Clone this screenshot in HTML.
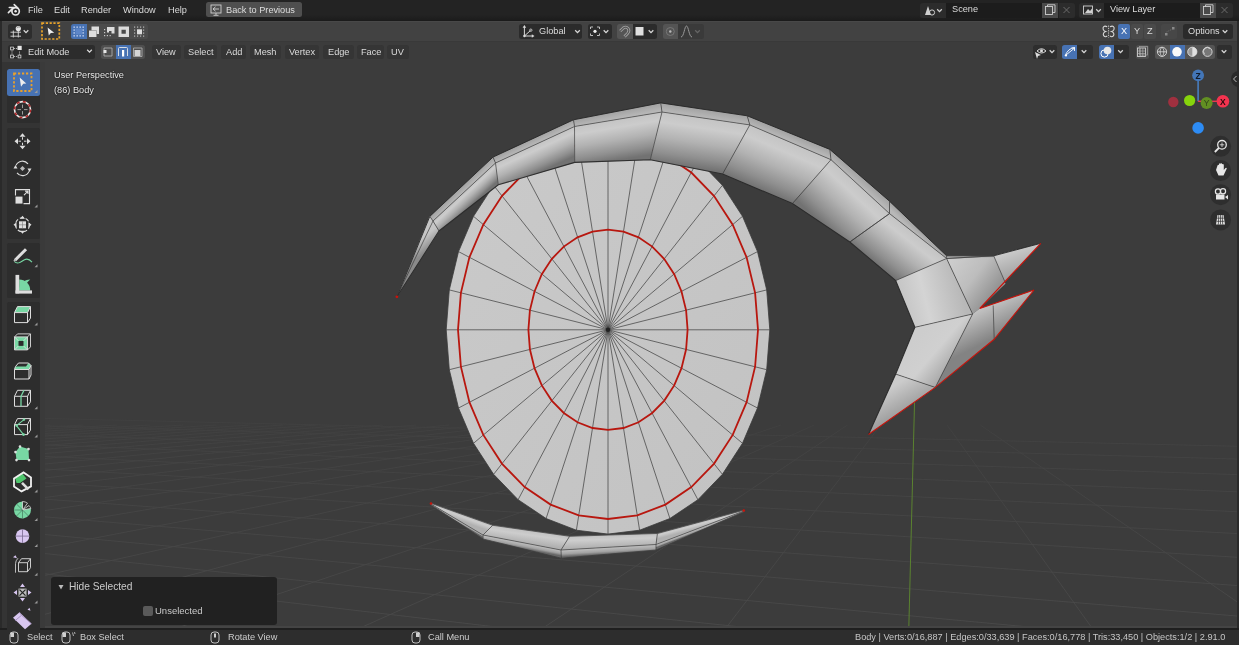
<!DOCTYPE html>
<html><head><meta charset="utf-8">
<style>
*{margin:0;padding:0;box-sizing:border-box}
html,body{width:1239px;height:645px;overflow:hidden;background:#3c3c3c;font-family:"Liberation Sans",sans-serif}
.a{position:absolute}
.t{position:absolute;font-size:9.2px;line-height:11px;white-space:nowrap;color:#dcdcdc;will-change:transform}
.sh{text-shadow:0 0 1.5px #111,0 0 1px #111}
.b{position:absolute;border-radius:2.5px}
svg{position:absolute;left:0;top:0;overflow:visible}
</style></head><body>
<svg width="1239" height="645" viewBox="0 0 1239 645">
<defs>
<linearGradient id="gdisc" x1="0" y1="0" x2="1" y2="1">
<stop offset="0" stop-color="#cacaca"/><stop offset="1" stop-color="#c2c2c2"/></linearGradient>
<linearGradient id="gbrow" x1="0" y1="0" x2="0" y2="1">
<stop offset="0" stop-color="#d4d4d4"/><stop offset="0.55" stop-color="#c4c4c4"/><stop offset="1" stop-color="#8c8c8c"/></linearGradient>
<linearGradient id="gclaw" x1="0" y1="0" x2="1" y2="1">
<stop offset="0" stop-color="#d0d0d0"/><stop offset="0.6" stop-color="#b8b8b8"/><stop offset="1" stop-color="#8a8a8a"/></linearGradient>
<linearGradient id="glid" x1="0" y1="0" x2="0" y2="1">
<stop offset="0" stop-color="#cfcfcf"/><stop offset="0.5" stop-color="#bdbdbd"/><stop offset="1" stop-color="#777"/></linearGradient>
</defs>
<linearGradient id="gfade" x1="0" y1="380" x2="0" y2="645" gradientUnits="userSpaceOnUse"><stop offset="0" stop-color="#fff" stop-opacity="0"/><stop offset="0.25" stop-color="#fff" stop-opacity="0.5"/><stop offset="1" stop-color="#fff" stop-opacity="1"/></linearGradient>
<mask id="mfade" maskUnits="userSpaceOnUse" x="0" y="0" width="1239" height="645"><rect x="0" y="380" width="1239" height="265" fill="url(#gfade)"/></mask>
<g stroke="#4b4b4b" stroke-width="0.9" mask="url(#mfade)"><line x1="-82.3" y1="425" x2="-4957.7" y2="645"/><line x1="-49.1" y1="425" x2="-4762.2" y2="645"/><line x1="-15.8" y1="425" x2="-4566.7" y2="645"/><line x1="17.4" y1="425" x2="-4371.1" y2="645"/><line x1="50.6" y1="425" x2="-4175.6" y2="645"/><line x1="83.8" y1="425" x2="-3980" y2="645"/><line x1="117" y1="425" x2="-3784.5" y2="645"/><line x1="150.2" y1="425" x2="-3588.9" y2="645"/><line x1="183.4" y1="425" x2="-3393.4" y2="645"/><line x1="216.6" y1="425" x2="-3197.8" y2="645"/><line x1="249.8" y1="425" x2="-3002.3" y2="645"/><line x1="283" y1="425" x2="-2806.8" y2="645"/><line x1="316.2" y1="425" x2="-2611.2" y2="645"/><line x1="349.4" y1="425" x2="-2415.7" y2="645"/><line x1="382.6" y1="425" x2="-2220.1" y2="645"/><line x1="415.8" y1="425" x2="-2024.6" y2="645"/><line x1="449" y1="425" x2="-1829" y2="645"/><line x1="482.2" y1="425" x2="-1633.5" y2="645"/><line x1="515.4" y1="425" x2="-1437.9" y2="645"/><line x1="548.6" y1="425" x2="-1242.4" y2="645"/><line x1="581.9" y1="425" x2="-1046.9" y2="645"/><line x1="615.1" y1="425" x2="-851.3" y2="645"/><line x1="648.3" y1="425" x2="-655.8" y2="645"/><line x1="681.5" y1="425" x2="-460.2" y2="645"/><line x1="714.7" y1="425" x2="-264.7" y2="645"/><line x1="747.9" y1="425" x2="-69.1" y2="645"/><line x1="781.1" y1="425" x2="126.4" y2="645"/><line x1="814.3" y1="425" x2="322" y2="645"/><line x1="847.5" y1="425" x2="517.5" y2="645"/><line x1="880.7" y1="425" x2="713" y2="645"/><line x1="947.1" y1="425" x2="1104.1" y2="645"/><line x1="980.3" y1="425" x2="1299.7" y2="645"/><line x1="0" y1="417.4" x2="1239" y2="446.3"/><line x1="0" y1="424.6" x2="1239" y2="459.1"/><line x1="0" y1="433.4" x2="1239" y2="474.7"/><line x1="0" y1="443.1" x2="1239" y2="491.9"/><line x1="0" y1="454.3" x2="1239" y2="511.8"/><line x1="0" y1="466.6" x2="1239" y2="533.7"/><line x1="0" y1="480" x2="1239" y2="557.4"/><line x1="0" y1="495.9" x2="1239" y2="585.7"/><line x1="0" y1="513.1" x2="1239" y2="616.2"/><line x1="0" y1="530.3" x2="1239" y2="646.7"/><line x1="0" y1="548.8" x2="1239" y2="679.5"/><line x1="0" y1="568.5" x2="1239" y2="714.5"/></g>
<line x1="914.6" y1="400" x2="908.8" y2="628" stroke="#5b8330" stroke-width="1"/>
<polygon points="769.8,329.8 766.7,289.9 757.5,251.6 742.5,216.3 722.4,185.3 697.9,159.9 669.9,141.1 639.6,129.4 608,125.5 576.4,129.4 546.1,141.1 518.1,159.9 493.6,185.3 473.5,216.3 458.5,251.6 449.3,289.9 446.2,329.8 449.3,369.7 458.5,408 473.5,443.3 493.6,474.3 518.1,499.7 546.1,518.5 576.4,530.2 608,534.1 639.6,530.2 669.9,518.5 697.9,499.7 722.4,474.3 742.5,443.3 757.5,408 766.7,369.7" fill="url(#gdisc)" stroke="#3a3a3a" stroke-width="0.8"/>
<g stroke="#2e2e2e" stroke-width="0.75" opacity="0.85"><line x1="608.0" y1="329.8" x2="769.8" y2="329.8"/><line x1="608.0" y1="329.8" x2="766.7" y2="289.9"/><line x1="608.0" y1="329.8" x2="757.5" y2="251.6"/><line x1="608.0" y1="329.8" x2="742.5" y2="216.3"/><line x1="608.0" y1="329.8" x2="722.4" y2="185.3"/><line x1="608.0" y1="329.8" x2="697.9" y2="159.9"/><line x1="608.0" y1="329.8" x2="669.9" y2="141.1"/><line x1="608.0" y1="329.8" x2="639.6" y2="129.4"/><line x1="608.0" y1="329.8" x2="608" y2="125.5"/><line x1="608.0" y1="329.8" x2="576.4" y2="129.4"/><line x1="608.0" y1="329.8" x2="546.1" y2="141.1"/><line x1="608.0" y1="329.8" x2="518.1" y2="159.9"/><line x1="608.0" y1="329.8" x2="493.6" y2="185.3"/><line x1="608.0" y1="329.8" x2="473.5" y2="216.3"/><line x1="608.0" y1="329.8" x2="458.5" y2="251.6"/><line x1="608.0" y1="329.8" x2="449.3" y2="289.9"/><line x1="608.0" y1="329.8" x2="446.2" y2="329.8"/><line x1="608.0" y1="329.8" x2="449.3" y2="369.7"/><line x1="608.0" y1="329.8" x2="458.5" y2="408"/><line x1="608.0" y1="329.8" x2="473.5" y2="443.3"/><line x1="608.0" y1="329.8" x2="493.6" y2="474.3"/><line x1="608.0" y1="329.8" x2="518.1" y2="499.7"/><line x1="608.0" y1="329.8" x2="546.1" y2="518.5"/><line x1="608.0" y1="329.8" x2="576.4" y2="530.2"/><line x1="608.0" y1="329.8" x2="608" y2="534.1"/><line x1="608.0" y1="329.8" x2="639.6" y2="530.2"/><line x1="608.0" y1="329.8" x2="669.9" y2="518.5"/><line x1="608.0" y1="329.8" x2="697.9" y2="499.7"/><line x1="608.0" y1="329.8" x2="722.4" y2="474.3"/><line x1="608.0" y1="329.8" x2="742.5" y2="443.3"/><line x1="608.0" y1="329.8" x2="757.5" y2="408"/><line x1="608.0" y1="329.8" x2="766.7" y2="369.7"/></g>
<polygon points="687.6,329.8 686.1,310.3 681.5,291.5 674.2,274.2 664.3,259 652.2,246.6 638.5,237.3 623.5,231.6 608,229.7 592.5,231.6 577.5,237.3 563.8,246.6 551.7,259 541.8,274.2 534.5,291.5 529.9,310.3 528.4,329.8 529.9,349.3 534.5,368.1 541.8,385.4 551.7,400.6 563.8,413 577.5,422.3 592.5,428 608,429.9 623.5,428 638.5,422.3 652.2,413 664.3,400.6 674.2,385.4 681.5,368.1 686.1,349.3" fill="none" stroke="#b8170f" stroke-width="1.8"/>
<polygon points="758,329.8 755.1,292.9 746.6,257.4 732.7,224.7 714.1,196 691.3,172.5 665.4,155 637.3,144.2 608,140.6 578.7,144.2 550.6,155 524.7,172.5 501.9,196 483.3,224.7 469.4,257.4 460.9,292.9 458,329.8 460.9,366.7 469.4,402.2 483.3,434.9 501.9,463.6 524.7,487.1 550.6,504.6 578.7,515.4 608,519 637.3,515.4 665.4,504.6 691.3,487.1 714.1,463.6 732.7,434.9 746.6,402.2 755.1,366.7" fill="none" stroke="#b8170f" stroke-width="1.8"/>
<circle cx="608.0" cy="329.8" r="2.2" fill="#222"/>
<polygon points="396.9,296.8 429.8,216.4 433,221 396.9,296.8" fill="#b0b0b0"/>
<linearGradient id="lg1" gradientUnits="userSpaceOnUse" x1="420" y1="240" x2="428" y2="250"><stop offset="0" stop-color="#c6c6c6"/><stop offset="1" stop-color="#8a8a8a"/></linearGradient>
<polygon points="396.9,296.8 429.8,216.4 439,231" fill="url(#lg1)" stroke="url(#lg1)" stroke-width="0.4"/>
<linearGradient id="lg2" gradientUnits="userSpaceOnUse" x1="461.4" y1="186.8" x2="465.4" y2="191"><stop offset="0" stop-color="#a2a2a2"/><stop offset="0.7" stop-color="#b2b2b2"/><stop offset="1" stop-color="#b8b8b8"/></linearGradient>
<polygon points="429.8,216.4 493,157.1 495.5,163 433,221" fill="url(#lg2)"/>
<linearGradient id="lg3" gradientUnits="userSpaceOnUse" x1="464.2" y1="192" x2="474.2" y2="202.7"><stop offset="0" stop-color="#c4c4c4"/><stop offset="0.2" stop-color="#cccccc"/><stop offset="0.5" stop-color="#b2b2b2"/><stop offset="0.8" stop-color="#8f8f8f"/><stop offset="1" stop-color="#727272"/></linearGradient>
<linearGradient id="lg4" gradientUnits="userSpaceOnUse" x1="464.2" y1="192" x2="474.2" y2="202.7"><stop offset="0" stop-color="#c4c4c4"/><stop offset="0.2" stop-color="#cccccc"/><stop offset="0.5" stop-color="#b2b2b2"/><stop offset="0.8" stop-color="#8f8f8f"/><stop offset="1" stop-color="#727272"/></linearGradient>
<polygon points="433,221 495.5,163 498.3,184.8 439,231" fill="url(#lg3)" stroke="url(#lg4)" stroke-width="0.4"/>
<linearGradient id="lg5" gradientUnits="userSpaceOnUse" x1="533.2" y1="138.4" x2="536" y2="144.3"><stop offset="0" stop-color="#a2a2a2"/><stop offset="0.7" stop-color="#b2b2b2"/><stop offset="1" stop-color="#b8b8b8"/></linearGradient>
<polygon points="493,157.1 573.5,119.8 574.5,126.5 495.5,163" fill="url(#lg5)"/>
<linearGradient id="lg6" gradientUnits="userSpaceOnUse" x1="535" y1="144.8" x2="546.2" y2="169.1"><stop offset="0" stop-color="#c4c4c4"/><stop offset="0.2" stop-color="#cccccc"/><stop offset="0.5" stop-color="#b2b2b2"/><stop offset="0.8" stop-color="#8f8f8f"/><stop offset="1" stop-color="#727272"/></linearGradient>
<linearGradient id="lg7" gradientUnits="userSpaceOnUse" x1="535" y1="144.8" x2="546.2" y2="169.1"><stop offset="0" stop-color="#c4c4c4"/><stop offset="0.2" stop-color="#cccccc"/><stop offset="0.5" stop-color="#b2b2b2"/><stop offset="0.8" stop-color="#8f8f8f"/><stop offset="1" stop-color="#727272"/></linearGradient>
<polygon points="495.5,163 574.5,126.5 574.7,162.4 498.3,184.8" fill="url(#lg6)" stroke="url(#lg7)" stroke-width="0.4"/>
<linearGradient id="lg8" gradientUnits="userSpaceOnUse" x1="617.1" y1="111.3" x2="618.6" y2="119.2"><stop offset="0" stop-color="#a2a2a2"/><stop offset="0.7" stop-color="#b2b2b2"/><stop offset="1" stop-color="#b8b8b8"/></linearGradient>
<polygon points="573.5,119.8 660.7,102.9 662,112 574.5,126.5" fill="url(#lg8)"/>
<linearGradient id="lg9" gradientUnits="userSpaceOnUse" x1="618.2" y1="119.2" x2="624.8" y2="159"><stop offset="0" stop-color="#c4c4c4"/><stop offset="0.2" stop-color="#cccccc"/><stop offset="0.5" stop-color="#b2b2b2"/><stop offset="0.8" stop-color="#8f8f8f"/><stop offset="1" stop-color="#727272"/></linearGradient>
<linearGradient id="lg10" gradientUnits="userSpaceOnUse" x1="618.2" y1="119.2" x2="624.8" y2="159"><stop offset="0" stop-color="#c4c4c4"/><stop offset="0.2" stop-color="#cccccc"/><stop offset="0.5" stop-color="#b2b2b2"/><stop offset="0.8" stop-color="#8f8f8f"/><stop offset="1" stop-color="#727272"/></linearGradient>
<polygon points="574.5,126.5 662,112 650.3,159.7 574.7,162.4" fill="url(#lg9)" stroke="url(#lg10)" stroke-width="0.4"/>
<linearGradient id="lg11" gradientUnits="userSpaceOnUse" x1="704" y1="109.3" x2="702.7" y2="118"><stop offset="0" stop-color="#a2a2a2"/><stop offset="0.7" stop-color="#b2b2b2"/><stop offset="1" stop-color="#b8b8b8"/></linearGradient>
<polygon points="660.7,102.9 747.2,115.8 749.8,124.9 662,112" fill="url(#lg11)"/>
<linearGradient id="lg12" gradientUnits="userSpaceOnUse" x1="705.9" y1="118.5" x2="698.5" y2="168.6"><stop offset="0" stop-color="#c4c4c4"/><stop offset="0.2" stop-color="#cccccc"/><stop offset="0.5" stop-color="#b2b2b2"/><stop offset="0.8" stop-color="#8f8f8f"/><stop offset="1" stop-color="#727272"/></linearGradient>
<linearGradient id="lg13" gradientUnits="userSpaceOnUse" x1="705.9" y1="118.5" x2="698.5" y2="168.6"><stop offset="0" stop-color="#c4c4c4"/><stop offset="0.2" stop-color="#cccccc"/><stop offset="0.5" stop-color="#b2b2b2"/><stop offset="0.8" stop-color="#8f8f8f"/><stop offset="1" stop-color="#727272"/></linearGradient>
<polygon points="662,112 749.8,124.9 722.6,174 650.3,159.7" fill="url(#lg12)" stroke="url(#lg13)" stroke-width="0.4"/>
<linearGradient id="lg14" gradientUnits="userSpaceOnUse" x1="788.5" y1="132.6" x2="785.4" y2="140.3"><stop offset="0" stop-color="#a2a2a2"/><stop offset="0.7" stop-color="#b2b2b2"/><stop offset="1" stop-color="#b8b8b8"/></linearGradient>
<polygon points="747.2,115.8 829.8,149.4 831,159.7 749.8,124.9" fill="url(#lg14)"/>
<linearGradient id="lg15" gradientUnits="userSpaceOnUse" x1="790.4" y1="142.3" x2="768.5" y2="193.5"><stop offset="0" stop-color="#c4c4c4"/><stop offset="0.2" stop-color="#cccccc"/><stop offset="0.5" stop-color="#b2b2b2"/><stop offset="0.8" stop-color="#8f8f8f"/><stop offset="1" stop-color="#727272"/></linearGradient>
<linearGradient id="lg16" gradientUnits="userSpaceOnUse" x1="790.4" y1="142.3" x2="768.5" y2="193.5"><stop offset="0" stop-color="#c4c4c4"/><stop offset="0.2" stop-color="#cccccc"/><stop offset="0.5" stop-color="#b2b2b2"/><stop offset="0.8" stop-color="#8f8f8f"/><stop offset="1" stop-color="#727272"/></linearGradient>
<polygon points="749.8,124.9 831,159.7 792.4,203.6 722.6,174" fill="url(#lg15)" stroke="url(#lg16)" stroke-width="0.4"/>
<linearGradient id="lg17" gradientUnits="userSpaceOnUse" x1="859.6" y1="175.3" x2="854.3" y2="181.5"><stop offset="0" stop-color="#a2a2a2"/><stop offset="0.7" stop-color="#b2b2b2"/><stop offset="1" stop-color="#b8b8b8"/></linearGradient>
<polygon points="829.8,149.4 889.5,201.2 889.5,213.6 831,159.7" fill="url(#lg17)"/>
<linearGradient id="lg18" gradientUnits="userSpaceOnUse" x1="860.2" y1="186.6" x2="824.3" y2="225.7"><stop offset="0" stop-color="#c4c4c4"/><stop offset="0.2" stop-color="#cccccc"/><stop offset="0.5" stop-color="#b2b2b2"/><stop offset="0.8" stop-color="#8f8f8f"/><stop offset="1" stop-color="#727272"/></linearGradient>
<linearGradient id="lg19" gradientUnits="userSpaceOnUse" x1="860.2" y1="186.6" x2="824.3" y2="225.7"><stop offset="0" stop-color="#c4c4c4"/><stop offset="0.2" stop-color="#cccccc"/><stop offset="0.5" stop-color="#b2b2b2"/><stop offset="0.8" stop-color="#8f8f8f"/><stop offset="1" stop-color="#727272"/></linearGradient>
<polygon points="831,159.7 889.5,213.6 849.8,242 792.4,203.6" fill="url(#lg18)" stroke="url(#lg19)" stroke-width="0.4"/>
<linearGradient id="lg20" gradientUnits="userSpaceOnUse" x1="918" y1="228.5" x2="914.3" y2="232.4"><stop offset="0" stop-color="#a2a2a2"/><stop offset="0.7" stop-color="#b2b2b2"/><stop offset="1" stop-color="#b8b8b8"/></linearGradient>
<polygon points="889.5,201.2 946.6,255.8 946.6,258.5 889.5,213.6" fill="url(#lg20)"/>
<linearGradient id="lg21" gradientUnits="userSpaceOnUse" x1="918" y1="236.1" x2="888.5" y2="273.7"><stop offset="0" stop-color="#c4c4c4"/><stop offset="0.2" stop-color="#cccccc"/><stop offset="0.5" stop-color="#b2b2b2"/><stop offset="0.8" stop-color="#8f8f8f"/><stop offset="1" stop-color="#727272"/></linearGradient>
<linearGradient id="lg22" gradientUnits="userSpaceOnUse" x1="918" y1="236.1" x2="888.5" y2="273.7"><stop offset="0" stop-color="#c4c4c4"/><stop offset="0.2" stop-color="#cccccc"/><stop offset="0.5" stop-color="#b2b2b2"/><stop offset="0.8" stop-color="#8f8f8f"/><stop offset="1" stop-color="#727272"/></linearGradient>
<polygon points="889.5,213.6 946.6,258.5 895.7,280.6 849.8,242" fill="url(#lg21)" stroke="url(#lg22)" stroke-width="0.4"/>
<linearGradient id="lg23" gradientUnits="userSpaceOnUse" x1="950" y1="262" x2="1000" y2="300"><stop offset="0" stop-color="#cdcdcd"/><stop offset="0.45" stop-color="#bdbdbd"/><stop offset="1" stop-color="#858585"/></linearGradient>
<polygon points="946.6,255.8 993.7,255.8 1040.8,243.3 979.8,308.5 972.6,314 946.6,258.5" fill="url(#lg23)"/>
<linearGradient id="lg24" gradientUnits="userSpaceOnUse" x1="1000" y1="256" x2="1012" y2="290"><stop offset="0" stop-color="#c9c9c9"/><stop offset="1" stop-color="#8e8e8e"/></linearGradient>
<polygon points="993.7,255.8 1040.8,243.3 979.8,308.5 1005.6,283.4" fill="url(#lg24)"/>
<polygon points="946.6,255.8 993.7,255.8 994.8,257.5 946.6,258.5" fill="#b2b2b2"/>
<linearGradient id="lg25" gradientUnits="userSpaceOnUse" x1="900" y1="300" x2="960" y2="285"><stop offset="0" stop-color="#c4c4c4"/><stop offset="0.4" stop-color="#d4d4d4"/><stop offset="1" stop-color="#b8b8b8"/></linearGradient>
<polygon points="946.6,258.5 972.6,314 914.9,327.3 895.7,280.6" fill="url(#lg25)"/>
<linearGradient id="lg26" gradientUnits="userSpaceOnUse" x1="985" y1="305" x2="1000" y2="335"><stop offset="0" stop-color="#c6c6c6"/><stop offset="1" stop-color="#838383"/></linearGradient>
<polygon points="979.8,308.5 1034,290 994.2,339.3 935.3,387.4 972.6,314" fill="url(#lg26)"/>
<linearGradient id="lg27" gradientUnits="userSpaceOnUse" x1="915" y1="340" x2="950" y2="370"><stop offset="0" stop-color="#cdcdcd"/><stop offset="0.5" stop-color="#d0d0d0"/><stop offset="1" stop-color="#a8a8a8"/></linearGradient>
<polygon points="914.9,327.3 972.6,314 935.3,387.4 895.7,374.1" fill="url(#lg27)"/>
<linearGradient id="lg28" gradientUnits="userSpaceOnUse" x1="895" y1="385" x2="915" y2="420"><stop offset="0" stop-color="#cbcbcb"/><stop offset="1" stop-color="#8a8a8a"/></linearGradient>
<polygon points="895.7,374.1 935.3,387.4 868.5,434.5" fill="url(#lg28)"/>
<g fill="none" stroke="#333" stroke-width="0.7" opacity="0.9"><polyline points="396.9,296.8 429.8,216.4 493,157.1 573.5,119.8 660.7,102.9 747.2,115.8 829.8,149.4 889.5,201.2 946.6,255.8 993.7,255.8 1040.8,243.3" stroke="#262626" stroke-width="1"/><polyline points="396.9,296.8 433,221 495.5,163 574.5,126.5 662,112 749.8,124.9 831,159.7 889.5,213.6 946.6,258.5 993.7,255.8"/><polyline points="396.9,296.8 439,231 498.3,184.8 574.7,162.4 650.3,159.7 722.6,174 792.4,203.6 849.8,242 895.7,280.6 914.9,327.3 895.7,374.1 868.5,434.5" stroke-width="1.1" stroke="#262626"/><polyline points="429.8,216.4 433,221 439,231"/><polyline points="493,157.1 495.5,163 498.3,184.8"/><polyline points="573.5,119.8 574.5,126.5 574.7,162.4"/><polyline points="660.7,102.9 662,112 650.3,159.7"/><polyline points="747.2,115.8 749.8,124.9 722.6,174"/><polyline points="829.8,149.4 831,159.7 792.4,203.6"/><polyline points="889.5,201.2 889.5,213.6 849.8,242"/><polyline points="946.6,255.8 946.6,258.5 895.7,280.6"/><line x1="946.6" y1="258.5" x2="972.6" y2="314"/><line x1="914.9" y1="327.3" x2="972.6" y2="314"/><line x1="972.6" y1="314" x2="935.3" y2="387.4"/><line x1="895.7" y1="374.1" x2="935.3" y2="387.4"/><line x1="993.7" y1="255.8" x2="1005.6" y2="283.4"/><line x1="993.2" y1="305.5" x2="994.2" y2="339.3"/><line x1="946.6" y1="258.5" x2="993.7" y2="255.8"/><line x1="889.5" y1="213.6" x2="849.8" y2="242"/></g>
<polyline points="1040.8,243.3 979.8,308.5 1034,290" fill="none" stroke="#c8140c" stroke-width="1.2"/>
<polyline points="1034,290 994.2,339.3 935.3,387.4 868.5,434.5" fill="none" stroke="#c8140c" stroke-width="1.1"/>
<circle cx="396.9" cy="296.8" r="1.4" fill="#c8140c"/>
<linearGradient id="lg29" gradientUnits="userSpaceOnUse" x1="461.9" y1="514.3" x2="459.7" y2="520.4"><stop offset="0" stop-color="#c2c2c2"/><stop offset="0.35" stop-color="#cdcdcd"/><stop offset="1" stop-color="#b0b0b0"/></linearGradient>
<polygon points="431,503.3 492.7,525.3 483,535 431,504" fill="url(#lg29)" stroke="url(#lg29)" stroke-width="0.3"/>
<linearGradient id="lg30" gradientUnits="userSpaceOnUse" x1="457" y1="519.5" x2="456" y2="521.2"><stop offset="0" stop-color="#c2c2c2"/><stop offset="0.6" stop-color="#a2a2a2"/><stop offset="1" stop-color="#666666"/></linearGradient>
<polygon points="431,504 483,535 483.1,539 431,504.7" fill="url(#lg30)" stroke="url(#lg30)" stroke-width="0.3"/>
<linearGradient id="lg31" gradientUnits="userSpaceOnUse" x1="531.1" y1="530.8" x2="529.3" y2="543.5"><stop offset="0" stop-color="#c2c2c2"/><stop offset="0.35" stop-color="#cdcdcd"/><stop offset="1" stop-color="#b0b0b0"/></linearGradient>
<polygon points="492.7,525.3 569.6,536.3 561,550 483,535" fill="url(#lg31)" stroke="url(#lg31)" stroke-width="0.3"/>
<linearGradient id="lg32" gradientUnits="userSpaceOnUse" x1="522" y1="542.5" x2="520.9" y2="548.3"><stop offset="0" stop-color="#c2c2c2"/><stop offset="0.6" stop-color="#a2a2a2"/><stop offset="1" stop-color="#666666"/></linearGradient>
<polygon points="483,535 561,550 561.3,558.2 483.1,539" fill="url(#lg32)" stroke="url(#lg32)" stroke-width="0.3"/>
<linearGradient id="lg33" gradientUnits="userSpaceOnUse" x1="613.5" y1="534.9" x2="613.9" y2="547.1"><stop offset="0" stop-color="#c2c2c2"/><stop offset="0.35" stop-color="#cdcdcd"/><stop offset="1" stop-color="#b0b0b0"/></linearGradient>
<polygon points="569.6,536.3 657.4,533.5 656,544.5 561,550" fill="url(#lg33)" stroke="url(#lg33)" stroke-width="0.3"/>
<linearGradient id="lg34" gradientUnits="userSpaceOnUse" x1="608.5" y1="547.2" x2="608.9" y2="554.1"><stop offset="0" stop-color="#c2c2c2"/><stop offset="0.6" stop-color="#a2a2a2"/><stop offset="1" stop-color="#666666"/></linearGradient>
<polygon points="561,550 656,544.5 656,550 561.3,558.2" fill="url(#lg34)" stroke="url(#lg34)" stroke-width="0.3"/>
<linearGradient id="lg35" gradientUnits="userSpaceOnUse" x1="700.6" y1="521.9" x2="702" y2="527.2"><stop offset="0" stop-color="#c2c2c2"/><stop offset="0.35" stop-color="#cdcdcd"/><stop offset="1" stop-color="#b0b0b0"/></linearGradient>
<polygon points="657.4,533.5 743.8,510.2 743.8,511 656,544.5" fill="url(#lg35)" stroke="url(#lg35)" stroke-width="0.3"/>
<linearGradient id="lg36" gradientUnits="userSpaceOnUse" x1="699.9" y1="527.8" x2="700.9" y2="530.4"><stop offset="0" stop-color="#c2c2c2"/><stop offset="0.6" stop-color="#a2a2a2"/><stop offset="1" stop-color="#666666"/></linearGradient>
<polygon points="656,544.5 743.8,511 743.8,511.6 656,550" fill="url(#lg36)" stroke="url(#lg36)" stroke-width="0.3"/>
<g fill="none" stroke="#333" stroke-width="0.7" opacity="0.9"><polyline points="431,503.3 492.7,525.3 569.6,536.3 657.4,533.5 743.8,510.2"/><polyline points="431,504 483,535 561,550 656,544.5 743.8,511"/><polyline points="431,504.7 483.1,539 561.3,558.2 656,550 743.8,511.6"/><polyline points="492.7,525.3 483,535 483.1,539"/><polyline points="569.6,536.3 561,550 561.3,558.2"/><polyline points="657.4,533.5 656,544.5 656,550"/></g>
<circle cx="431" cy="503.5" r="1.3" fill="#c8140c"/><circle cx="743.8" cy="510.6" r="1.3" fill="#c8140c"/>
</svg>

<!-- bars -->
<div class="a" style="left:0;top:0;width:1239px;height:20px;background:#232323"></div>
<div class="a" style="left:0;top:15px;width:1239px;height:5px;background:linear-gradient(#232323,#1c1c1c)"></div><div class="a" style="left:0;top:20px;width:1239px;height:1px;background:#1b1b1b"></div>
<div class="a" style="left:0;top:21px;width:1239px;height:20px;background:#424242"></div><div class="a" style="left:0;top:21px;width:1239px;height:1px;background:#484848"></div>
<div class="a" style="left:0;top:41px;width:1239px;height:1px;background:#393939"></div>
<div class="a" style="left:0;top:626px;width:1239px;height:1.5px;background:#444"></div><div class="a" style="left:0;top:628px;width:1239px;height:17px;background:#2d2d2d"></div><div class="a" style="left:0;top:628px;width:1239px;height:2px;background:#1f1f1f"></div>
<!-- left/right borders -->
<div class="a" style="left:0;top:21px;width:1.5px;height:607px;background:#2a2a2a"></div>
<div class="a" style="left:1237px;top:21px;width:2px;height:607px;background:#2a2a2a"></div>

<!-- ===== top bar ===== -->
<svg width="1239" height="21">
 <circle cx="15.6" cy="11.3" r="3.7" fill="none" stroke="#e6e6e6" stroke-width="1.7"/>
 <circle cx="15.6" cy="11.2" r="1.2" fill="#f0f0f0"/>
 <path d="M8.4 12.6 L12.8 8.4 M9.3 7.5 H14.2 M14.2 4.6 L17.6 7.8" stroke="#e6e6e6" stroke-width="1.6" stroke-linecap="round" fill="none"/>
</svg>
<div class="t" style="left:28.3px;top:4.6px">File</div>
<div class="t" style="left:53.8px;top:4.6px">Edit</div>
<div class="t" style="left:81px;top:4.6px">Render</div>
<div class="t" style="left:123px;top:4.6px">Window</div>
<div class="t" style="left:168px;top:4.6px">Help</div>
<div class="b" style="left:206px;top:2.2px;width:96px;height:14.8px;background:#4f4f4f"></div>
<svg width="1239" height="21">
 <rect x="211" y="5" width="10" height="8" fill="none" stroke="#d0d0d0" stroke-width="0.9"/>
 <path d="M213 9 H219 M213 9 L215.5 6.8 M213 9 L215.5 11.2 M216 13 V15 M213.5 15.3 H218.5" stroke="#d0d0d0" stroke-width="0.9" fill="none"/>
</svg>
<div class="t" style="left:226px;top:4.6px;color:#dedede">Back to Previous</div>

<!-- scene selector -->
<div class="b" style="left:920px;top:2.5px;width:26px;height:15px;background:#2c2c2c;border-radius:2.5px 0 0 2.5px"></div>
<div class="a" style="left:946px;top:2.5px;width:96px;height:15px;background:#1c1c1c"></div>
<div class="a" style="left:1042px;top:2.5px;width:16px;height:15px;background:#4a4a4a"></div>
<div class="b" style="left:1058.5px;top:2.5px;width:16px;height:15px;background:#2c2c2c;border-radius:0 2.5px 2.5px 0"></div>
<div class="t" style="left:951.5px;top:4.2px">Scene</div>
<div class="b" style="left:1079px;top:2.5px;width:25px;height:15px;background:#2c2c2c;border-radius:2.5px 0 0 2.5px"></div>
<div class="a" style="left:1104px;top:2.5px;width:96px;height:15px;background:#1c1c1c"></div>
<div class="a" style="left:1200px;top:2.5px;width:16px;height:15px;background:#4a4a4a"></div>
<div class="b" style="left:1216px;top:2.5px;width:17px;height:15px;background:#2c2c2c;border-radius:0 2.5px 2.5px 0"></div>
<div class="t" style="left:1109.8px;top:4.2px">View Layer</div>
<svg width="1239" height="21">
 <g fill="#d0d0d0">
  <path d="M925 15 L928 6 L931 15 Z"/>
 </g>
 <circle cx="932" cy="12.5" r="2.6" fill="none" stroke="#d0d0d0" stroke-width="1"/>
 <path d="M937.2 9.2 L939.5 11.6 L941.8 9.2" stroke="#d0d0d0" fill="none" stroke-width="1.25"/>
 <g fill="none" stroke="#cfcfcf" stroke-width="0.9">
  <rect x="1045.5" y="6.5" width="7" height="8"/><path d="M1047.5 6.5 V4.8 H1055 V12.5 H1052.5"/>
  <rect x="1203.5" y="6.5" width="7" height="8"/><path d="M1205.5 6.5 V4.8 H1213 V12.5 H1210.5"/>
 </g>
 <g stroke="#6a6a6a" stroke-width="1">
  <path d="M1063.5 7 L1069.5 13 M1069.5 7 L1063.5 13"/>
  <path d="M1221.5 7 L1227.5 13 M1227.5 7 L1221.5 13"/>
 </g>
 <rect x="1083.5" y="6" width="9" height="8" fill="none" stroke="#d0d0d0" stroke-width="0.9"/>
 <path d="M1085 13 L1088 9 L1090 11 L1092 8.5 V13 Z" fill="#d0d0d0"/>
 <path d="M1096.2 9.2 L1098.5 11.6 L1100.8 9.2" stroke="#d0d0d0" fill="none" stroke-width="1.25"/>
</svg>

<!-- ===== tool settings row ===== -->
<div class="b" style="left:7.5px;top:24px;width:24px;height:15px;background:#2d2d2d"></div>
<div class="b" style="left:71px;top:24px;width:15.5px;height:15px;background:#4772b3;border-radius:2.5px 0 0 2.5px"></div>
<div class="a" style="left:86.5px;top:24px;width:15px;height:15px;background:#4b4b4b"></div>
<div class="a" style="left:101.5px;top:24px;width:15px;height:15px;background:#4b4b4b"></div>
<div class="a" style="left:116.5px;top:24px;width:15px;height:15px;background:#4b4b4b"></div>
<div class="b" style="left:131.5px;top:24px;width:16px;height:15px;background:#4b4b4b;border-radius:0 2.5px 2.5px 0"></div>
<div class="b" style="left:519px;top:24px;width:63px;height:15px;background:#2b2b2b"></div>
<div class="t" style="left:538.6px;top:25.5px">Global</div>
<div class="b" style="left:587.5px;top:24px;width:24.5px;height:15px;background:#2b2b2b"></div>
<div class="b" style="left:616.5px;top:24px;width:16px;height:15px;background:#545454;border-radius:2.5px 0 0 2.5px"></div>
<div class="b" style="left:632.5px;top:24px;width:24px;height:15px;background:#2b2b2b;border-radius:0 2.5px 2.5px 0"></div>
<div class="b" style="left:663px;top:24px;width:15px;height:15px;background:#545454;border-radius:2.5px 0 0 2.5px"></div>
<div class="b" style="left:678px;top:24px;width:26px;height:15px;background:#3a3a3a;border-radius:0 2.5px 2.5px 0"></div>
<div class="b" style="left:1118px;top:24px;width:12px;height:15.3px;background:#4772b3;border-radius:2px"></div>
<div class="b" style="left:1131.2px;top:24px;width:11.8px;height:15.3px;background:#4a4a4a;border-radius:2px"></div>
<div class="b" style="left:1144px;top:24px;width:12.3px;height:15.3px;background:#4a4a4a;border-radius:2px"></div>
<div class="b" style="left:1161.4px;top:24px;width:15.6px;height:15.3px;background:#474747"></div>
<div class="b" style="left:1182.5px;top:24px;width:50px;height:15px;background:#2b2b2b"></div>
<div class="t" style="left:1188.3px;top:25.5px">Options</div>
<div class="t" style="left:1120.5px;top:25.5px;color:#fff">X</div>
<div class="t" style="left:1133.5px;top:25.5px">Y</div>
<div class="t" style="left:1146.8px;top:25.5px">Z</div>
<svg width="1239" height="42">
 <!-- editor type icon -->
 <g stroke="#d8d8d8" stroke-width="0.9" fill="none">
  <path d="M10.5 32.2 H21 M10.5 36.2 H21 M13.3 30.5 V37.5 M18.3 30.5 V37.5"/>
 </g>
 <circle cx="18.3" cy="28.6" r="2.6" fill="#e6e6e6"/>
 <path d="M16.9 28.2 A1.6 1.6 0 0 1 19.6 27.5" stroke="#555" stroke-width="0.6" fill="none"/>
 <path d="M23.7 30.2 L26.0 32.6 L28.3 30.2" stroke="#d8d8d8" fill="none" stroke-width="1.25"/>
 <!-- select tool icon -->
 <rect x="42" y="23.2" width="17.3" height="15.8" fill="#383838" stroke="#e8a32a" stroke-width="1.7" stroke-dasharray="2.2 1.6"/>
 <path d="M47.6 27.6 L54.2 32.8 L50.8 33 L48.8 35.6 Z" fill="#eeeeee"/>
 <!-- select mode icons -->
 <g fill="#d8e4ff"><rect x="73.5" y="26.5" width="1.3" height="1.3"/><rect x="76.5" y="26.5" width="1.3" height="1.3"/><rect x="79.5" y="26.5" width="1.3" height="1.3"/><rect x="82.5" y="26.5" width="1.3" height="1.3"/>
 <rect x="73.5" y="35.2" width="1.3" height="1.3"/><rect x="76.5" y="35.2" width="1.3" height="1.3"/><rect x="79.5" y="35.2" width="1.3" height="1.3"/><rect x="82.5" y="35.2" width="1.3" height="1.3"/>
 <rect x="73.5" y="29.4" width="1.3" height="1.3"/><rect x="73.5" y="32.3" width="1.3" height="1.3"/><rect x="82.5" y="29.4" width="1.3" height="1.3"/><rect x="82.5" y="32.3" width="1.3" height="1.3"/></g>
 <rect x="75.5" y="28.5" width="6.5" height="6" fill="#5d86c8"/>
 <path d="M89 37 V30.5 H91.5 V26.5 H99 V34 H96.5 V37 Z" fill="#dcdcdc"/>
 <path d="M89.5 30.5 H96.5 V37" fill="none" stroke="#888" stroke-width="0.6"/>
 <g fill="#c8c8c8"><rect x="104" y="35" width="1.2" height="1.2"/><rect x="106.8" y="35" width="1.2" height="1.2"/><rect x="109.6" y="35" width="1.2" height="1.2"/><rect x="104" y="32" width="1.2" height="1.2"/><rect x="104" y="29" width="1.2" height="1.2"/></g>
 <path d="M107 32.5 V27 H114.5 V33.5 H111.5 V31 H109 V32.5 Z" fill="#dcdcdc"/>
 <path d="M118.5 26.5 H129 V37 H118.5 Z M121.5 29.8 V33.8 H125.8 V29.8 Z" fill="#dcdcdc" fill-rule="evenodd"/>
 <g fill="#b8b8b8"><rect x="134" y="26.5" width="1.2" height="1.2"/><rect x="137" y="26.5" width="1.2" height="1.2"/><rect x="140" y="26.5" width="1.2" height="1.2"/><rect x="143" y="26.5" width="1.2" height="1.2"/>
 <rect x="134" y="35.5" width="1.2" height="1.2"/><rect x="137" y="35.5" width="1.2" height="1.2"/><rect x="140" y="35.5" width="1.2" height="1.2"/><rect x="143" y="35.5" width="1.2" height="1.2"/>
 <rect x="134" y="29.5" width="1.2" height="1.2"/><rect x="134" y="32.5" width="1.2" height="1.2"/><rect x="143" y="29.5" width="1.2" height="1.2"/><rect x="143" y="32.5" width="1.2" height="1.2"/></g>
 <rect x="137" y="29.3" width="5" height="5" fill="#dcdcdc"/>
 <!-- Global icon + chevron -->
 <path d="M524.4 36 V26.5 M524.4 36 H533 M524.4 36 L530.5 30.5" stroke="#d8d8d8" stroke-width="1" fill="none"/><path d="M522.6 27.8 L524.4 25 L526.2 27.8 Z M531.8 34.2 L534.5 36 L531.8 37.8 Z" fill="#d8d8d8"/><circle cx="530.8" cy="30.2" r="1.2" fill="none" stroke="#d8d8d8" stroke-width="0.8"/><circle cx="524.4" cy="36" r="1.2" fill="#d8d8d8"/>
 <path d="M575.2 30.2 L577.5 32.6 L579.8 30.2" stroke="#d8d8d8" fill="none" stroke-width="1.25"/>
 <!-- pivot -->
 <path d="M590.5 29 V27 H593 M597 27 H599.5 V29 M599.5 33.5 V35.5 H597 M593 35.5 H590.5 V33.5" stroke="#cfcfcf" stroke-width="0.9" fill="none"/>
 <circle cx="595" cy="31.3" r="1.6" fill="#eee"/>
 <path d="M603.7 30.2 L606.0 32.6 L608.3 30.2" stroke="#d8d8d8" fill="none" stroke-width="1.25"/>
 <!-- snap -->
 <g transform="translate(624.5,31.5) scale(0.78) translate(-625,-31.5)"><path d="M619.5 31 L623.5 27 Q627 24.5 629.5 27.5 Q632 30.5 629 34 L625 38" stroke="#a8a8a8" stroke-width="3.6" fill="none"/><path d="M619.5 31 L623.5 27 Q627 24.5 629.5 27.5 Q632 30.5 629 34 L625 38" stroke="#545454" stroke-width="1.6" fill="none"/></g>
 <rect x="635.5" y="27" width="8" height="8.5" fill="#e0e0e0"/>
 <path d="M648.7 30.2 L651.0 32.6 L653.3 30.2" stroke="#d8d8d8" fill="none" stroke-width="1.25"/>
 <!-- proportional -->
 <circle cx="670.3" cy="31.5" r="4" fill="none" stroke="#777" stroke-width="1"/>
 <circle cx="670.3" cy="31.5" r="1.2" fill="#bbb"/>
 <path d="M681 37 C684 37 684.5 26 686.5 26 C688.5 26 689 37 692 37" stroke="#9a9a9a" stroke-width="1" fill="none"/>
 <path d="M695.2 30.2 L697.5 32.6 L699.8 30.2" stroke="#666" fill="none" stroke-width="1.25"/>
 <!-- mirror icon -->
 <path d="M1108.6 25.5 V37.5" stroke="#d0d0d0" stroke-width="0.9" stroke-dasharray="1.3 1"/>
 <path d="M1107.2 26.8 C1104.2 25.2 1102.3 27 1103.3 29.6 C1103.8 30.8 1104.8 31.3 1105.6 31.5 C1104 32 1102.8 33.6 1103.5 35.3 C1104.3 37.2 1106.2 37 1107.2 35.8 M1110 26.8 C1113 25.2 1114.9 27 1113.9 29.6 C1113.4 30.8 1112.4 31.3 1111.6 31.5 C1113.2 32 1114.4 33.6 1113.7 35.3 C1112.9 37.2 1111 37 1110 35.8" stroke="#d8d8d8" stroke-width="1.1" fill="none"/>
 <!-- automerge -->
 <g fill="#8a8a8a"><rect x="1165" y="33" width="2.5" height="2.5"/><rect x="1172" y="27" width="2.5" height="2.5"/></g>
 <path d="M1166.5 32 L1172.5 29" stroke="#777" stroke-width="0.8" stroke-dasharray="1 1"/>
 <path d="M1222.7 30.2 L1225.0 32.6 L1227.3 30.2" stroke="#d8d8d8" fill="none" stroke-width="1.25"/>
</svg>

<!-- ===== header row ===== -->
<div class="b" style="left:7.5px;top:45px;width:87px;height:13.5px;background:#2c2c2c"></div>
<div class="t" style="left:27.5px;top:46.5px">Edit Mode</div>
<div class="b" style="left:101px;top:44.5px;width:14.5px;height:14px;background:#4f4f4f;border-radius:2.5px 0 0 2.5px"></div>
<div class="a" style="left:115.5px;top:44.5px;width:15px;height:14px;background:#4772b3"></div>
<div class="b" style="left:130.5px;top:44.5px;width:14.5px;height:14px;background:#4f4f4f;border-radius:0 2.5px 2.5px 0"></div>
<div class="b" style="left:151.5px;top:45px;width:29px;height:13.5px;background:#353535"></div>
<div class="b" style="left:184px;top:45px;width:33px;height:13.5px;background:#353535"></div>
<div class="b" style="left:221px;top:45px;width:25px;height:13.5px;background:#353535"></div>
<div class="b" style="left:250px;top:45px;width:31px;height:13.5px;background:#353535"></div>
<div class="b" style="left:284.5px;top:45px;width:34px;height:13.5px;background:#353535"></div>
<div class="b" style="left:322.5px;top:45px;width:31px;height:13.5px;background:#353535"></div>
<div class="b" style="left:357px;top:45px;width:27px;height:13.5px;background:#353535"></div>
<div class="b" style="left:387px;top:45px;width:22px;height:13.5px;background:#353535"></div>
<div class="t" style="left:156px;top:46.5px">View</div>
<div class="t" style="left:188px;top:46.5px">Select</div>
<div class="t" style="left:226px;top:46.5px">Add</div>
<div class="t" style="left:254px;top:46.5px">Mesh</div>
<div class="t" style="left:288.5px;top:46.5px">Vertex</div>
<div class="t" style="left:327.5px;top:46.5px">Edge</div>
<div class="t" style="left:361px;top:46.5px">Face</div>
<div class="t" style="left:391px;top:46.5px">UV</div>
<!-- header right -->
<div class="b" style="left:1032.5px;top:44.5px;width:24.5px;height:14.5px;background:#2e2e2e"></div>
<div class="b" style="left:1062px;top:44.5px;width:15px;height:14.5px;background:#4772b3;border-radius:2.5px 0 0 2.5px"></div>
<div class="b" style="left:1077px;top:44.5px;width:15.5px;height:14.5px;background:#2e2e2e;border-radius:0 2.5px 2.5px 0"></div>
<div class="b" style="left:1098.5px;top:44.5px;width:15px;height:14.5px;background:#4772b3;border-radius:2.5px 0 0 2.5px"></div>
<div class="b" style="left:1113.5px;top:44.5px;width:15px;height:14.5px;background:#2e2e2e;border-radius:0 2.5px 2.5px 0"></div>
<div class="b" style="left:1135.5px;top:44.5px;width:13.5px;height:14.5px;background:#4d4d4d"></div>
<div class="b" style="left:1154.5px;top:44.5px;width:15px;height:14.5px;background:#545454;border-radius:2.5px 0 0 2.5px"></div>
<div class="a" style="left:1169.5px;top:44.5px;width:15px;height:14.5px;background:#4772b3"></div>
<div class="a" style="left:1184.5px;top:44.5px;width:15.5px;height:14.5px;background:#545454"></div>
<div class="b" style="left:1200px;top:44.5px;width:15px;height:14.5px;background:#545454;border-radius:0 2.5px 2.5px 0"></div>
<div class="b" style="left:1216.5px;top:44.5px;width:15px;height:14.5px;background:#2e2e2e"></div>
<svg width="1239" height="64">
 <!-- mode icon -->
 <path d="M12 48.5 V56.5 H19.5 M12 48.5 H17.5 M19.5 51.5 V56.5" stroke="#cfcfcf" stroke-width="0.8" fill="none" stroke-dasharray="1.2 0.8"/>
 <g fill="#2c2c2c" stroke="#d8d8d8" stroke-width="0.8"><rect x="10.6" y="47.1" width="2.8" height="2.8"/><rect x="10.6" y="55.1" width="2.8" height="2.8"/><rect x="18.1" y="55.1" width="2.8" height="2.8"/></g>
 <rect x="17.5" y="45.8" width="4.2" height="4.2" fill="#e8e8e8"/>
 <path d="M87.2 49.7 L89.5 52.1 L91.8 49.7" stroke="#d8d8d8" fill="none" stroke-width="1.25"/>
 <!-- vertex/edge/face select -->
 <path d="M104 48 H112 V56 H104 Z" fill="none" stroke="#aaa" stroke-width="0.9"/>
 <rect x="103.5" y="50" width="3" height="3" fill="#e6e6e6"/>
 <path d="M118.5 56 V48.5 Q118.5 47.5 119.5 47.5 H126.5 Q127.5 47.5 127.5 48.5 V56" fill="none" stroke="#e8e8e8" stroke-width="0.9"/>
 <rect x="122" y="50" width="2.2" height="6.5" fill="#fff"/>
 <path d="M133.5 48 H142 V56.5 H133.5 Z" fill="none" stroke="#aaa" stroke-width="0.9"/>
 <rect x="134.5" y="50" width="6" height="6" fill="#d6d6d6"/>
 <!-- visibility -->
 <path d="M1037 51 Q1041.5 46.5 1046 51 Q1041.5 55 1037 51 Z" fill="none" stroke="#ddd" stroke-width="1"/>
 <circle cx="1041.5" cy="50.8" r="1.5" fill="#ddd"/>
 <path d="M1035 52 L1041 55 L1038 56 L1037 59 Z" fill="#ddd"/>
 <path d="M1049.7 50.2 L1052.0 52.6 L1054.3 50.2" stroke="#d8d8d8" fill="none" stroke-width="1.25"/>
 <!-- gizmo -->
 <path d="M1065 56 Q1068 48 1075 47.5" stroke="#fff" stroke-width="0.9" fill="none"/>
 <path d="M1066 55 L1074 48.5 M1071.5 48 H1074.5 V51" stroke="#fff" stroke-width="0.9" fill="none"/>
 <circle cx="1066" cy="55.5" r="1.1" fill="#fff"/>
 <path d="M1081.7 50.2 L1084.0 52.6 L1086.3 50.2" stroke="#d8d8d8" fill="none" stroke-width="1.25"/>
 <!-- overlays -->
 <circle cx="1104.5" cy="53.5" r="3.6" fill="none" stroke="#fff" stroke-width="1"/>
 <circle cx="1107.5" cy="50.5" r="3.8" fill="#e8e8e8"/>
 <path d="M1118.2 50.2 L1120.5 52.6 L1122.8 50.2" stroke="#d8d8d8" fill="none" stroke-width="1.25"/>
 <!-- xray -->
 <rect x="1137.5" y="48" width="8" height="8.5" fill="none" stroke="#cfcfcf" stroke-width="0.9"/>
 <rect x="1139.5" y="46.5" width="8" height="8.5" fill="none" stroke="#999" stroke-width="0.8"/>
 <path d="M1137.5 51 H1145.5 M1137.5 53.5 H1145.5 M1140.3 48 V56.5 M1142.8 48 V56.5" stroke="#bbb" stroke-width="0.6"/>
 <!-- shading -->
 <circle cx="1162" cy="51.8" r="4.6" fill="none" stroke="#ddd" stroke-width="0.9"/>
 <path d="M1157.4 51.8 H1166.6 M1162 47.2 C1159.5 49 1159.5 54.6 1162 56.4 C1164.5 54.6 1164.5 49 1162 47.2" stroke="#ddd" stroke-width="0.8" fill="none"/>
 <circle cx="1177" cy="51.8" r="4.8" fill="#fafafa"/>
 <circle cx="1192.3" cy="51.8" r="4.6" fill="#9a9a9a" stroke="#ddd" stroke-width="0.9"/>
 <path d="M1192.3 47.2 A4.6 4.6 0 0 1 1192.3 56.4 Z" fill="#e0e0e0"/>
 <circle cx="1207.5" cy="51.8" r="4.6" fill="#777" stroke="#ddd" stroke-width="0.9"/>
 <path d="M1204.5 54 A3.5 3.5 0 0 1 1210 48.8" stroke="#ddd" stroke-width="0.8" fill="none"/>
 <path d="M1221.7 50.2 L1224.0 52.6 L1226.3 50.2" stroke="#d8d8d8" fill="none" stroke-width="1.25"/>
</svg>

<!-- ===== viewport overlay text ===== -->
<div class="t sh" style="left:54.4px;top:70.2px;color:#eee">User Perspective</div>
<div class="t sh" style="left:54.4px;top:85.2px;color:#eee">(86) Body</div>

<!-- ===== toolbar ===== -->
<div class="a" style="left:1.5px;top:62px;width:38.5px;height:566px;background:#343434"></div><div class="a" style="left:40px;top:62px;width:5px;height:566px;background:#3a3a3a"></div>
<div class="b" style="left:7.3px;top:69px;width:32.7px;height:54px;background:#2d2d2d;border-radius:1.5px"></div>
<div class="b" style="left:7px;top:69px;width:33px;height:26.5px;background:#4772b3"></div>
<div class="b" style="left:7.3px;top:128px;width:32.7px;height:111px;background:#2d2d2d;border-radius:1.5px"></div>
<div class="b" style="left:7.3px;top:242.5px;width:32.7px;height:55.5px;background:#2d2d2d;border-radius:1.5px"></div>
<div class="b" style="left:7.3px;top:302px;width:32.7px;height:330px;background:#2d2d2d;border-radius:1.5px"></div>
<svg width="60" height="645"><g transform="translate(22.5,82)"><rect x="-8.5" y="-8.5" width="17.5" height="17.5" fill="none" stroke="#e9a02b" stroke-width="1.8" stroke-dasharray="2.2 1.8"/><path d="M-2.8 -4.4 L3.8 1.5 L0.8 1.7 L-1.5 4.8 Z" fill="#eee"/></g><path d="M37.5 90 V93 H34.5 Z" fill="#9a9a9a"/><g transform="translate(22.5,109.6)"><circle r="8" fill="none" stroke="#eee" stroke-width="1.6"/><circle r="8" fill="none" stroke="#b0282a" stroke-width="1.7" stroke-dasharray="3 3.3"/><path d="M-5 0 H-1.5 M1.5 0 H5 M0 -5 V-1.5 M0 1.5 V5" stroke="#aaa" stroke-width="0.9"/></g><g transform="translate(22.5,141.2)"><path d="M-8 0 L-4.5 -3 V3 Z M8 0 L4.5 -3 V3 Z M0 -8 L-3 -4.5 H3 Z M0 8 L-3 4.5 H3 Z" fill="#dedede"/><path d="M-4 0 H-1.5 M1.5 0 H4 M0 -4 V-1.5 M0 1.5 V4" stroke="#dedede" stroke-width="1"/></g><g transform="translate(22.5,168.4)"><path d="M-6.5 -3 A7 7 0 0 1 5.5 -4.5 M6.5 3 A7 7 0 0 1 -5.5 4.5" fill="none" stroke="#dedede" stroke-width="1.1"/><path d="M-9 0 L-5 0 L-7 -3.5 Z M9 0 L5 0 L7 3.5 Z" fill="#dedede" transform="rotate(180)"/><path d="M0 -2.5 L2.5 0 L0 2.5 L-2.5 0 Z" fill="#bbb"/></g><g transform="translate(22.5,196.6)"><path d="M-7 -1 V-7 H7 V7 H1" fill="none" stroke="#dedede" stroke-width="1.1"/><rect x="-7" y="0" width="7" height="7" fill="#dedede"/><path d="M1.5 -1.5 L5.5 -5.5 M2.5 -5.5 H5.5 V-2.5" fill="none" stroke="#dedede" stroke-width="1.1"/></g><path d="M37.5 204.6 V207.6 H34.5 Z" fill="#9a9a9a"/><g transform="translate(22.5,224.8)"><circle r="7" fill="none" stroke="#dedede" stroke-width="1.1" stroke-dasharray="4 2"/><path d="M0 -9 L-2.5 -6 H2.5 Z M0 9 L-2.5 6 H2.5 Z M-9 0 L-6 -2.5 V2.5 Z M9 0 L6 -2.5 V2.5 Z" fill="#dedede"/><rect x="-3.5" y="-3.5" width="7" height="7" fill="#dedede"/><path d="M-3.5 0 H3.5 M0 -3.5 V3.5" stroke="#777" stroke-width="0.6"/></g><g transform="translate(22.5,256.2)"><path d="M-8 5.5 C-4 9 -1 5 2 3.5 C5 2 7 3 9.5 6" fill="none" stroke="#78d8a4" stroke-width="1.1"/><path d="M-7.5 4 L3.5 -7" stroke="#dedede" stroke-width="3"/><path d="M-8.5 5 L-7 3" stroke="#bbb" stroke-width="1.5"/></g><path d="M37.5 264.2 V267.2 H34.5 Z" fill="#9a9a9a"/><g transform="translate(22.5,284.4)"><path d="M-3.3 6 A11 11 0 0 1 7.7 -5 Z" fill="#78d8a4" transform="translate(0,0)"/><path d="M-3.3 6 V-5 A11 11 0 0 1 7.7 6 Z" fill="#78d8a4"/><rect x="-7" y="-9.5" width="3.7" height="18.5" fill="#dedede"/><rect x="-7" y="6" width="16.5" height="3.2" fill="#dedede"/></g><g transform="translate(22.5,314.6)"><path d="M-8 -2 L-5 -8 H8 L5 -2 Z" fill="#78d8a4"/><path d="M-8 -2 H5 V8 H-8 Z M-8 -2 L-5 -8 H8 L5 -2 M5 8 L8 3.5 V-8" fill="none" stroke="#dedede" stroke-width="1"/></g><path d="M37.5 322.6 V325.6 H34.5 Z" fill="#9a9a9a"/><g transform="translate(22.5,342.9)"><path d="M-8 -6 H5 V7 H-8 Z" fill="#78d8a4"/><rect x="-4" y="-2" width="5" height="5" fill="#2c2c2c"/><path d="M-8 -6 H5 V7 H-8 Z M-8 -6 L-5 -9 H8 L5 -6 M5 7 L8 4 V-9 M-8 -6 L-4 -2 M5 -6 L1 -2 M5 7 L1 3 M-8 7 L-4 3" fill="none" stroke="#dedede" stroke-width="0.9"/></g><g transform="translate(22.5,371)"><path d="M-8 -1.5 L-7 -4.5 H3.5 L6.5 -1.5 Z M3.5 -4.5 L6 -8 L8.5 -5.5 L6.5 -1.5 Z" fill="#78d8a4"/><path d="M-8 -1.5 H6.5 V8 H-8 Z M-8 -1.5 L-7 -4.5 L-4 -8 H6 L8.5 -5.5 V4 L6.5 8 M6.5 -1.5 L8.5 -5.5" fill="none" stroke="#dedede" stroke-width="1"/></g><g transform="translate(22.5,398.3)"><path d="M-8 -2 H5 V8 H-8 Z M-8 -2 L-5 -8 H8 L5 -2 M5 8 L8 3.5 V-8" fill="none" stroke="#dedede" stroke-width="1"/><path d="M-1.5 8 V-2 L1.5 -8" fill="none" stroke="#78d8a4" stroke-width="1.3"/></g><path d="M37.5 406.3 V409.3 H34.5 Z" fill="#9a9a9a"/><g transform="translate(22.5,426.6)"><path d="M-8 -2 H5 V8 H-8 Z M-8 -2 L-5 -8 H8 L5 -2 M5 8 L8 3.5 V-8" fill="none" stroke="#dedede" stroke-width="1"/><path d="M-6 -1 L1 8 M-6 -1 L1.5 -7" fill="none" stroke="#78d8a4" stroke-width="1.1"/><circle cx="1" cy="8" r="1.4" fill="#78d8a4"/><circle cx="-6" cy="-1" r="1.2" fill="#78d8a4"/><circle cx="1.5" cy="-7" r="1.2" fill="#78d8a4"/></g><path d="M37.5 434.6 V437.6 H34.5 Z" fill="#9a9a9a"/><g transform="translate(22.5,454.1)"><path d="M-7 -2 L-2.5 -7.5 L6 -5 L6.5 6 L-6 6 Z" fill="#78d8a4"/><g fill="#dedede"><circle cx="-7" cy="-2" r="1.3"/><circle cx="-2.5" cy="-7.5" r="1.3"/><circle cx="6" cy="-5" r="1.3"/><circle cx="6.5" cy="6" r="1.3"/><circle cx="-6" cy="6" r="1.3"/></g></g><g transform="translate(22.5,481.4)"><path d="M-7.5 -4 L-0.5 -8.5 L4 -3 L-2.5 1.5 L-6 1.5 Z" fill="#4fc66d"/><path d="M-8.5 -3 L1 -9 L8.5 -4 L8.5 5 L-1 10 L-8.5 5 Z" fill="none" stroke="#f0f0f0" stroke-width="1.8"/><path d="M-0.5 1.5 L6 8" stroke="#ddd" stroke-width="2.6"/></g><path d="M37.5 489.4 V492.4 H34.5 Z" fill="#9a9a9a"/><g transform="translate(22.5,510)"><path d="M0 0 L0 -8.5 A8.5 8.5 0 1 0 8.3 -1.5 Z" fill="#78d8a4"/><path d="M0 0 L0 -8.5 A8.5 8.5 0 0 1 5 -6.8 Z M0 0 L6.5 -4.5 A8 8 0 0 1 8.3 -1.5 Z" fill="none" stroke="#ddd" stroke-width="0.8"/><path d="M0 0 L-8.5 0 M0 0 L0 8.5 M0 0 L-6 -6 M0 0 L-6 6 M0 0 L6 6" stroke="#3a6a50" stroke-width="0.6"/></g><path d="M37.5 518 V521 H34.5 Z" fill="#9a9a9a"/><g transform="translate(22.5,536.1)"><circle r="6.8" fill="#d8c6f0"/><path d="M-6.8 0 H6.8 M0 -6.8 V6.8" stroke="#7a6a90" stroke-width="0.8"/></g><path d="M37.5 544.1 V547.1 H34.5 Z" fill="#9a9a9a"/><g transform="translate(22.5,564.7)"><path d="M-4 -2 H5 V7 H-4 Z M-4 -2 L-1 -6 H8 L5 -2 M5 7 L8 3 V-6" fill="none" stroke="#dedede" stroke-width="0.9"/><path d="M-7 8 V-1 Q-7 -4 -4.5 -6.5" fill="none" stroke="#ccc" stroke-width="0.9"/><path d="M-9.5 -7.5 L-7 -9.5 L-5.5 -6.5 Z" fill="#d8c6f0"/></g><path d="M37.5 572.7 V575.7 H34.5 Z" fill="#9a9a9a"/><g transform="translate(22.5,592.6)"><path d="M0 -9 L-2.5 -5.5 H2.5 Z M0 9 L-2.5 5.5 H2.5 Z M-9 0 L-5.5 -2.5 V2.5 Z M9 0 L5.5 -2.5 V2.5 Z" fill="#d8c6f0"/><rect x="-4" y="-4" width="8" height="8" fill="#bbb"/><path d="M-3 -3 L3 3 M3 -3 L-3 3" stroke="#222" stroke-width="1.2"/></g><path d="M37.5 600.6 V603.6 H34.5 Z" fill="#9a9a9a"/><g transform="translate(22.5,620.8)"><path d="M-9.5 -3 L-3 -8.5 L9 3 L2.5 8.5 Z" fill="#d8c6f0"/><path d="M-3 -8.5 L-1 -5.5 L9 3 M-1 -5.5 L-7.5 0" fill="none" stroke="#9a88b5" stroke-width="0.8"/><path d="M5 -11 L7 -13 L8 -10 Z" fill="#d8c6f0"/></g></svg>


<!-- ===== gizmo & nav ===== -->
<svg width="1239" height="645"><path d="M1198.1 101.3 V80.5" stroke="#4a86d0" stroke-width="1.4"/><path d="M1198.1 101.3 H1217" stroke="#e8384f" stroke-width="1.4"/><circle cx="1173.3" cy="102" r="5.2" fill="#a0303f"/><circle cx="1189.6" cy="100.5" r="5.6" fill="#86d40c"/><circle cx="1206.6" cy="103.1" r="6" fill="#628f22"/><text x="1206.6" y="106.3" text-anchor="middle" style="font-family:'Liberation Sans',sans-serif;font-size:8.5px;font-weight:bold;font-weight:normal" fill="#33461a">Y</text><circle cx="1222.9" cy="101.3" r="6.3" fill="#f5334f"/><text x="1222.9" y="104.5" text-anchor="middle" style="font-family:'Liberation Sans',sans-serif;font-size:8.5px;font-weight:bold" fill="#2a0a0e">X</text><circle cx="1198.1" cy="75.3" r="5.9" fill="#4376b8"/><text x="1198.1" y="78.5" text-anchor="middle" style="font-family:'Liberation Sans',sans-serif;font-size:8.5px;font-weight:bold" fill="#101a2a">Z</text><circle cx="1198.1" cy="127.9" r="5.8" fill="#2d8cf5"/><path d="M1239 71 A8 8 0 0 0 1239 87 Z" fill="#2a2a2a"/><path d="M1236.5 76 L1233.5 79 L1236.5 82" stroke="#bbb" stroke-width="1" fill="none"/><circle cx="1220.6" cy="146.3" r="10.5" fill="#2b2b2b" opacity="0.85"/><circle cx="1220.6" cy="170.5" r="10.5" fill="#2b2b2b" opacity="0.85"/><circle cx="1220.6" cy="194.7" r="10.5" fill="#2b2b2b" opacity="0.85"/><circle cx="1220.6" cy="219.9" r="10.5" fill="#2b2b2b" opacity="0.85"/><circle cx="1222" cy="144.8" r="4.3" fill="none" stroke="#e6e6e6" stroke-width="1.3"/><path d="M1218.8 148 L1214.8 152" stroke="#e6e6e6" stroke-width="1.8"/><path d="M1222 142.5 V147 M1219.8 144.8 H1224.2" stroke="#e6e6e6" stroke-width="0.8"/><path d="M1216 170 L1217.5 165.5 Q1218 164.5 1219 165 V164 Q1219.5 163 1220.5 163.5 V163.8 Q1221 163 1222 163.5 V164.3 Q1223 163.8 1223.8 164.6 V170 L1225.5 168 Q1226.5 167.5 1226.8 168.5 L1223.5 175.5 H1218.5 Z" fill="#e6e6e6"/><circle cx="1218" cy="191.5" r="2.6" fill="none" stroke="#e6e6e6" stroke-width="1.2"/><circle cx="1223" cy="191.3" r="2.6" fill="none" stroke="#e6e6e6" stroke-width="1.2"/><rect x="1216" y="194.5" width="8.5" height="5" fill="#e6e6e6"/><path d="M1225 197 L1228 195 V199.5 Z" fill="#e6e6e6"/><path d="M1216 224.5 L1217.5 215 H1223.5 L1225 224.5 Z" fill="#e6e6e6"/><path d="M1216.6 221.3 H1224.4 M1217.1 218.2 H1223.9 M1218.8 215 L1218.3 224.5 M1220.5 215 V224.5 M1222.2 215 L1222.7 224.5" stroke="#2e2e2e" stroke-width="0.7"/></svg>


<!-- ===== last operator panel ===== -->
<div class="b" style="left:51px;top:577px;width:226px;height:48px;background:#212121;border-radius:3px"></div>
<svg width="300" height="645"><path d="M58.5 585 H63.5 L61 589.5 Z" fill="#bbb"/></svg>
<div class="t" style="left:68.5px;top:581.2px;font-size:10.2px;color:#cacaca">Hide Selected</div>
<div class="b" style="left:143px;top:606px;width:10px;height:9.5px;background:#5a5a5a;border-radius:2px"></div>
<div class="t" style="left:155px;top:604.9px;font-size:9.5px;color:#cacaca">Unselected</div>

<!-- ===== status bar ===== -->
<svg width="1239" height="645">
 <g fill="none" stroke="#cfcfcf" stroke-width="0.9">
  <rect x="10" y="632" width="8" height="11" rx="3"/>
  <rect x="62" y="632" width="8" height="11" rx="3"/>
  <rect x="211" y="632" width="8" height="11" rx="3"/>
  <rect x="412" y="632" width="8" height="11" rx="3"/>
 </g>
 <g fill="#cfcfcf">
  <rect x="10.5" y="632.5" width="3.5" height="4.5"/>
  <rect x="62.5" y="632.5" width="3.5" height="4.5"/>
  <rect x="214" y="633.5" width="2" height="4"/>
  <rect x="416" y="632.5" width="3.5" height="4.5"/>
 </g>
 <path d="M72.5 632.5 L73.5 636 M74.5 632 L75 634" stroke="#cfcfcf" stroke-width="0.8"/>
</svg>
<div class="t" style="left:27px;top:631.5px;color:#cdcdcd">Select</div>
<div class="t" style="left:80px;top:631.5px;color:#cdcdcd">Box Select</div>
<div class="t" style="left:227.6px;top:631.5px;color:#cdcdcd">Rotate View</div>
<div class="t" style="left:428px;top:631.5px;color:#cdcdcd">Call Menu</div>
<div class="t" style="left:855px;top:631.5px;color:#c6c6c6">Body | Verts:0/16,887 | Edges:0/33,639 | Faces:0/16,778 | Tris:33,450 | Objects:1/2 | 2.91.0</div>
</body></html>
